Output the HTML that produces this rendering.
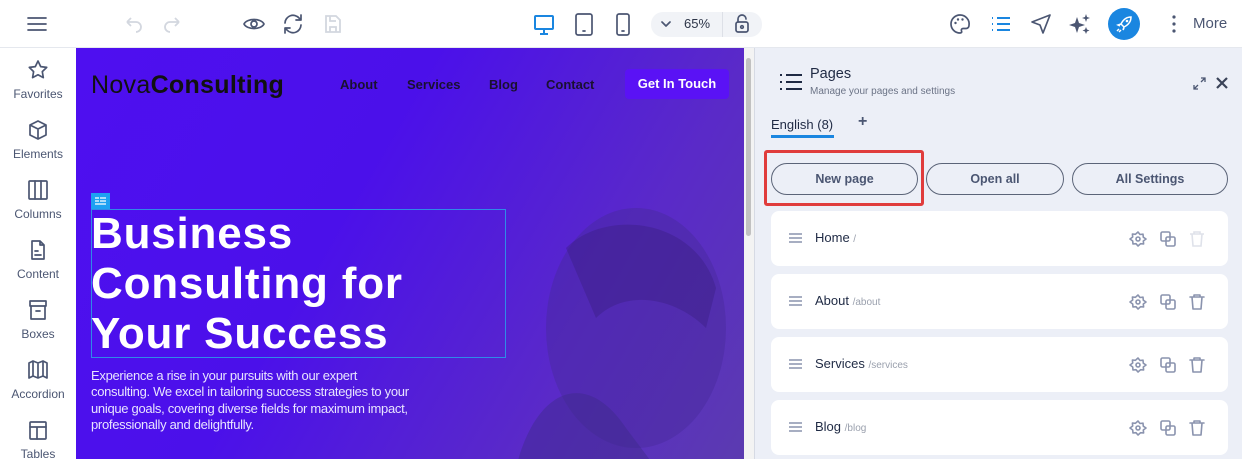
<!DOCTYPE html>
<html><head><style>
*{margin:0;padding:0;box-sizing:border-box}
body{width:1242px;height:459px;overflow:hidden;background:#fff;font-family:"Liberation Sans",sans-serif;position:relative}
.abs{position:absolute}
.side{left:0;top:48px;width:76px;height:411px;background:#fff}
.side .it{position:absolute;left:0;width:76px;text-align:center;font-size:12px;color:#4b5672}
.side svg{display:block;margin:0 auto 5px}
.ic{stroke:#4b5672;fill:none;stroke-width:1.7;stroke-linecap:round;stroke-linejoin:round}
.canvas{left:76px;top:48px;width:668px;height:411px;background:linear-gradient(120deg,#4e0ff0 0%,#4b10ea 40%,#5a2ac8 75%,#5b3bb0 100%);overflow:hidden}
.panel{left:754px;top:48px;width:488px;height:411px;background:#eceff7;border-left:1px solid #d6dae4}
.btn{position:absolute;top:163px;height:32px;border:1.3px solid #5b6478;border-radius:16px;text-align:center;line-height:30px;font-size:12.5px;font-weight:bold;color:#4b5672}
.row{position:absolute;left:771px;width:457px;height:55px;background:#fff;border-radius:8px}
.row .n{position:absolute;left:44px;top:19px;font-size:13px;color:#1f2a44}
.row .n span{font-size:10px;color:#9aa0ad}
.row svg{position:absolute;top:19px}
.ri{stroke:#8a93ae;fill:none;stroke-width:1.6;stroke-linejoin:round;stroke-linecap:round}
</style></head><body>
<svg class="abs" style="left:26px;top:14px" width="22" height="20"><path class="ic" d="M2 4h18M2 10h18M2 16h18" stroke-width="2"/></svg>
<svg class="abs" style="left:122px;top:14px" width="22" height="20"><path d="M5 8h9a5 5 0 0 1 0 10M5 8l4-4M5 8l4 4" stroke="#d3d7df" fill="none" stroke-width="1.8"/></svg>
<svg class="abs" style="left:162px;top:14px" width="22" height="20"><path d="M17 8H8a5 5 0 0 0 0 10M17 8l-4-4M17 8l-4 4" stroke="#d3d7df" fill="none" stroke-width="1.8"/></svg>
<svg class="abs" style="left:242px;top:13px" width="24" height="22"><path class="ic" d="M2 11c3-6 17-6 20 0c-3 6-17 6-20 0z" stroke-width="2"/><circle cx="12" cy="11" r="3" class="ic" stroke-width="2"/></svg>
<svg class="abs" style="left:281px;top:12px" width="24" height="24"><path class="ic" d="M4 11a8 8 0 0 1 14-5l2 2M20 13a8 8 0 0 1-14 5l-2-2M20 3v5h-5M4 21v-5h5" stroke-width="2"/></svg>
<svg class="abs" style="left:322px;top:13px" width="22" height="22"><path d="M4 3h10l4 4v12H4z M8 3v5h6 M8 19v-5h6v5" stroke="#d3d7df" fill="none" stroke-width="1.8"/></svg>
<svg class="abs" style="left:532px;top:13px" width="24" height="24"><rect x="3" y="3" width="18" height="13" rx="1" fill="none" stroke="#1a86e0" stroke-width="2"/><path d="M12 16v4M8 21h8" stroke="#1a86e0" stroke-width="2"/></svg>
<svg class="abs" style="left:572px;top:12px" width="24" height="25"><rect x="4" y="2" width="16" height="21" rx="2" class="ic" stroke-width="2"/><path d="M11 19h2" class="ic"/></svg>
<svg class="abs" style="left:613px;top:12px" width="20" height="25"><rect x="4" y="2" width="12" height="21" rx="2" class="ic" stroke-width="2"/><path d="M9 19h2" class="ic"/></svg>
<div class="abs" style="left:651px;top:12px;width:111px;height:25px;background:#f1f3f7;border-radius:12px"></div>
<svg class="abs" style="left:661px;top:20px" width="10" height="8"><path d="M1 2l4 4 4-4" class="ic" stroke-width="1.4"/></svg>
<div class="abs" style="left:684px;top:16px;font-size:13px;color:#2d3548">65%</div>
<div class="abs" style="left:722px;top:12px;width:1px;height:25px;background:#dde0e7"></div>
<svg class="abs" style="left:733px;top:13px" width="18" height="22"><path class="ic" d="M5 9V6a4 4 0 0 1 8 0" /><rect x="3" y="9" width="12" height="10" rx="2" class="ic"/><circle cx="9" cy="14" r="1.3" class="ic"/></svg>
<svg class="abs" style="left:948px;top:12px" width="24" height="24"><path class="ic" stroke-width="2" d="M12 3a9 9 0 1 0 0 18c1.5 0 2-1 1.5-2s0-2.5 1.5-2.5H18a3 3 0 0 0 3-3A9 9 0 0 0 12 3z"/><circle cx="7.5" cy="11" r="1.2" fill="#4b5672"/><circle cx="10" cy="7.5" r="1.2" fill="#4b5672"/><circle cx="14.5" cy="7.5" r="1.2" fill="#4b5672"/></svg>
<svg class="abs" style="left:990px;top:15px" width="22" height="18"><path d="M2 3h1M2 9h1M2 15h1M7 3h13M7 9h13M7 15h13" stroke="#1a86e0" stroke-width="2"/></svg>
<svg class="abs" style="left:1029px;top:12px" width="24" height="24"><path class="ic" stroke-width="2" d="M21 3L3 10l8 3 3 8z"/></svg>
<svg class="abs" style="left:1068px;top:12px" width="24" height="24"><path fill="#4b5672" d="M9 5l2 6 6 2-6 2-2 6-2-6-6-2 6-2zM18 2l1 3 3 1-3 1-1 3-1-3-3-1 3-1zM18 15l1 2.5 2.5 1-2.5 1-1 2.5-1-2.5-2.5-1 2.5-1z"/></svg>
<div class="abs" style="left:1108px;top:8px;width:32px;height:32px;border-radius:50%;background:#1a86e0"></div>
<svg class="abs" style="left:1114px;top:14px" width="20" height="20"><path d="M17 3c-5 0-8 3-10 7l3 3c4-2 7-5 7-10zM7 10l-3 1 2 1M10 13l-1 3 1-2M5 15l-2 2M7 16l-2 2" stroke="#fff" fill="none" stroke-width="1.5"/><circle cx="13" cy="7" r="1.3" fill="#fff"/></svg>
<svg class="abs" style="left:1170px;top:14px" width="8" height="20"><circle cx="4" cy="3" r="1.6" fill="#4b5672"/><circle cx="4" cy="10" r="1.6" fill="#4b5672"/><circle cx="4" cy="17" r="1.6" fill="#4b5672"/></svg>
<div class="abs" style="left:1193px;top:15px;font-size:15px;color:#4b5672">More</div>
<div class="abs" style="left:0;top:47px;width:1242px;height:1px;background:#e5e8ee"></div>

<div class="abs side">
<div class="it" style="top:10px"><svg width="24" height="24"><path class="ic" d="M12 3l2.7 5.6 6 .8-4.4 4.2 1 6L12 16.8 6.6 19.6l1-6L3.3 9.4l6-.8z"/></svg>Favorites</div>
<div class="it" style="top:70px"><svg width="24" height="24"><path class="ic" d="M12 3l8 4v10l-8 4-8-4V7zM4 7l8 4 8-4M12 11v10"/></svg>Elements</div>
<div class="it" style="top:130px"><svg width="24" height="24"><rect x="3" y="3" width="18" height="18" rx="1" class="ic"/><path class="ic" d="M9 3v18M15 3v18"/></svg>Columns</div>
<div class="it" style="top:190px"><svg width="24" height="24"><path class="ic" d="M6 3h8l4 4v14H6zM14 3v4h4M9 13h3M9 17h6"/></svg>Content</div>
<div class="it" style="top:250px"><svg width="24" height="24"><rect x="4" y="3" width="16" height="5" class="ic"/><path class="ic" d="M5 8v13h14V8M10 13h4"/></svg>Boxes</div>
<div class="it" style="top:310px"><svg width="24" height="24"><path class="ic" d="M3 5l4-2 5 2 5-2 4 2v15l-4-2-5 2-5-2-4 2zM7 3v15M12 5v15M17 3v15"/></svg>Accordion</div>
<div class="it" style="top:370px"><svg width="24" height="24"><rect x="4" y="4" width="16" height="17" rx="1" class="ic"/><path class="ic" d="M4 9h16M11 9v12"/></svg>Tables</div>
</div>

<div class="abs canvas">
 <svg class="abs" style="left:380px;top:120px" width="300" height="300"><ellipse cx="180" cy="160" rx="90" ry="120" fill="#472a9c" opacity=".45"/><path d="M60 300 C80 220 130 200 170 260 L200 300z" fill="#3e2a8a" opacity=".45"/><path d="M110 80 C150 40 240 50 260 120 L250 160 C220 130 170 120 140 150z" fill="#3a1f80" opacity=".4"/></svg>
 <div class="abs" style="left:15px;top:23px;font-size:25px;color:#111;letter-spacing:.3px">Nova<b>Consulting</b></div>
 <div class="abs" style="left:264px;top:29px;font-size:13px;font-weight:bold;color:#1a1030">About</div>
 <div class="abs" style="left:331px;top:29px;font-size:13px;font-weight:bold;color:#1a1030">Services</div>
 <div class="abs" style="left:413px;top:29px;font-size:13px;font-weight:bold;color:#1a1030">Blog</div>
 <div class="abs" style="left:470px;top:29px;font-size:13px;font-weight:bold;color:#1a1030">Contact</div>
 <div class="abs" style="left:549px;top:21px;width:104px;height:30px;background:#5a12f5;border-radius:4px;color:#fff;font-size:13px;font-weight:bold;text-align:center;line-height:30px">Get In Touch</div>
 <div class="abs" style="left:15px;top:145px;width:19px;height:16px;background:#1da1f2"></div>
 <svg class="abs" style="left:19px;top:149px" width="11" height="9"><path d="M0 1h4M0 4h4M5 1h6M5 4h6M0 7h11" stroke="#fff" stroke-width="1.3"/></svg>
 <div class="abs" style="left:15px;top:161px;width:415px;height:149px;border:1px solid #2f8ae8"></div>
 <div class="abs" style="left:15px;top:161px;font-size:44px;font-weight:bold;color:#fff;line-height:50px;letter-spacing:.8px;white-space:nowrap">Business<br>Consulting for<br>Your Success</div>
 <div class="abs" style="left:15px;top:320px;width:320px;font-size:13px;color:#e8e4ff;line-height:16.3px;letter-spacing:-.3px">Experience a rise in your pursuits with our expert consulting. We excel in tailoring success strategies to your unique goals, covering diverse fields for maximum impact, professionally and delightfully.</div>
</div>
<div class="abs" style="left:744px;top:48px;width:10px;height:411px;background:#f3f3f3"></div>
<div class="abs" style="left:746px;top:58px;width:5px;height:178px;background:#c1c1c1;border-radius:3px"></div>

<div class="abs panel"></div>
<svg class="abs" style="left:779px;top:72px" width="24" height="20"><path d="M1 3h2M1 10h2M1 17h2M7 3h16M7 10h16M7 17h16" stroke="#1f2a44" stroke-width="2"/></svg>
<div class="abs" style="left:810px;top:66px;font-size:14.5px;color:#1f2a44">Pages</div>
<div class="abs" style="left:810px;top:86px;font-size:10px;color:#6b7386">Manage your pages and settings</div>
<svg class="abs" style="left:1193px;top:77px" width="13" height="13"><path d="M8 1h4v4M12 1L8 5M5 12H1V8M1 12l4-4" stroke="#4b5672" fill="none" stroke-width="1.3"/></svg>
<svg class="abs" style="left:1215px;top:76px" width="14" height="14"><path d="M2 2l10 10M12 2L2 12" stroke="#3a4358" stroke-width="2.2"/></svg>
<div class="abs" style="left:771px;top:117px;font-size:13px;color:#1f2a44">English (8)</div>
<div class="abs" style="left:771px;top:135px;width:63px;height:3px;background:#1a86e0"></div>
<div class="abs" style="left:858px;top:113px;font-size:16px;font-weight:bold;color:#4b5672">+</div>
<div class="abs" style="left:764px;top:150px;width:160px;height:56px;border:3px solid #e03c3c;border-radius:3px"></div>
<div class="btn" style="left:771px;width:147px">New page</div>
<div class="btn" style="left:926px;width:138px">Open all</div>
<div class="btn" style="left:1072px;width:156px">All Settings</div>

<div class="row" style="top:211px"><svg style="left:17px" width="16" height="16"><path d="M1 4h13M1 8h13M1 12h13" stroke="#8a93ae" stroke-width="1.6"/></svg><div class="n">Home <span>/</span></div>
<svg style="left:358px" width="18" height="18"><path class="ri" d="M9 2l2 2.5 3-.3.3 3L17 9l-2.7 2 .3 3-3-.3L9 16l-2-2.3-3 .3-.3-3L1 9l2.7-2-.3-3 3 .3z"/><circle cx="9" cy="9" r="2" class="ri"/></svg>
<svg style="left:388px" width="18" height="18"><rect x="2" y="2" width="9" height="9" rx="1.5" class="ri"/><rect x="7" y="7" width="9" height="9" rx="1.5" class="ri"/></svg>
<svg style="left:417px" width="18" height="18"><path d="M2 4h14M6 4V2h6v2M4 4l1 12h8l1-12" stroke="#dfe2ea" fill="none" stroke-width="1.6"/></svg></div>

<div class="row" style="top:274px"><svg style="left:17px" width="16" height="16"><path d="M1 4h13M1 8h13M1 12h13" stroke="#8a93ae" stroke-width="1.6"/></svg><div class="n">About <span>/about</span></div>
<svg style="left:358px" width="18" height="18"><path class="ri" d="M9 2l2 2.5 3-.3.3 3L17 9l-2.7 2 .3 3-3-.3L9 16l-2-2.3-3 .3-.3-3L1 9l2.7-2-.3-3 3 .3z"/><circle cx="9" cy="9" r="2" class="ri"/></svg>
<svg style="left:388px" width="18" height="18"><rect x="2" y="2" width="9" height="9" rx="1.5" class="ri"/><rect x="7" y="7" width="9" height="9" rx="1.5" class="ri"/></svg>
<svg style="left:417px" width="18" height="18"><path class="ri" d="M2 4h14M6 4V2h6v2M4 4l1 12h8l1-12"/></svg></div>

<div class="row" style="top:337px"><svg style="left:17px" width="16" height="16"><path d="M1 4h13M1 8h13M1 12h13" stroke="#8a93ae" stroke-width="1.6"/></svg><div class="n">Services <span>/services</span></div>
<svg style="left:358px" width="18" height="18"><path class="ri" d="M9 2l2 2.5 3-.3.3 3L17 9l-2.7 2 .3 3-3-.3L9 16l-2-2.3-3 .3-.3-3L1 9l2.7-2-.3-3 3 .3z"/><circle cx="9" cy="9" r="2" class="ri"/></svg>
<svg style="left:388px" width="18" height="18"><rect x="2" y="2" width="9" height="9" rx="1.5" class="ri"/><rect x="7" y="7" width="9" height="9" rx="1.5" class="ri"/></svg>
<svg style="left:417px" width="18" height="18"><path class="ri" d="M2 4h14M6 4V2h6v2M4 4l1 12h8l1-12"/></svg></div>

<div class="row" style="top:400px"><svg style="left:17px" width="16" height="16"><path d="M1 4h13M1 8h13M1 12h13" stroke="#8a93ae" stroke-width="1.6"/></svg><div class="n">Blog <span>/blog</span></div>
<svg style="left:358px" width="18" height="18"><path class="ri" d="M9 2l2 2.5 3-.3.3 3L17 9l-2.7 2 .3 3-3-.3L9 16l-2-2.3-3 .3-.3-3L1 9l2.7-2-.3-3 3 .3z"/><circle cx="9" cy="9" r="2" class="ri"/></svg>
<svg style="left:388px" width="18" height="18"><rect x="2" y="2" width="9" height="9" rx="1.5" class="ri"/><rect x="7" y="7" width="9" height="9" rx="1.5" class="ri"/></svg>
<svg style="left:417px" width="18" height="18"><path class="ri" d="M2 4h14M6 4V2h6v2M4 4l1 12h8l1-12"/></svg></div>
</body></html>
